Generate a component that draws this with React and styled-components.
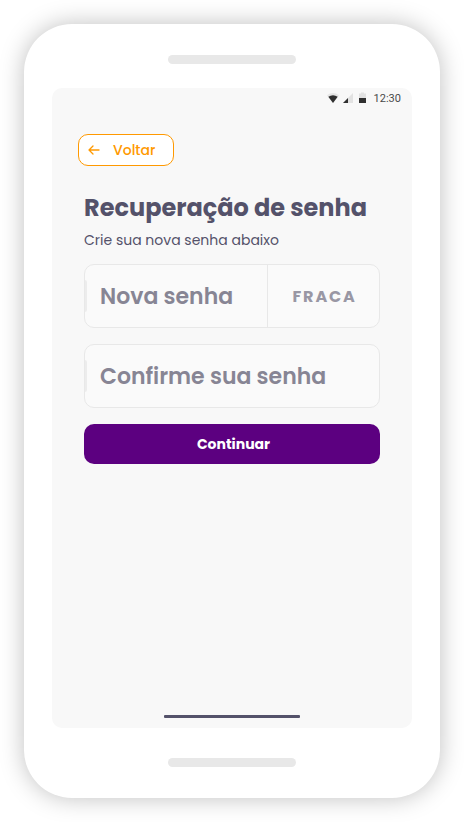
import React from 'react';
import styled, { createGlobalStyle } from 'styled-components';

const GlobalStyle = createGlobalStyle`
  * { box-sizing: border-box; }
  body { margin: 0; background: #fff; font-family: Poppins, Inter, sans-serif; overflow: hidden; }
  button, input { font: inherit; }
`;

const Stage = styled.main`
  width: 464px;
  height: 822px;
  padding: 24px;
`;

const Phone = styled.div`
  width: 416px;
  height: 774px;
  padding: 31px 28px;
  border-radius: 48px;
  background: #fff;
  box-shadow: 0 0 24px rgba(0, 0, 0, 0.25);
  display: flex;
  flex-direction: column;
  align-items: center;
  justify-content: space-between;
`;

const Speaker = styled.div`
  width: 128px;
  height: 9px;
  border-radius: 5px;
  background: #e8e8e8;
`;

const Screen = styled.section`
  width: 360px;
  height: 640px;
  margin-top: -6px;
  border-radius: 10px;
  background: #f8f8f8;
  display: flex;
  flex-direction: column;
`;

const StatusBar = styled.header`
  height: 20px;
  padding-right: 11px;
  display: flex;
  align-items: center;
  justify-content: flex-end;
`;

const StatusIcons = styled.svg`
  width: 40px;
  height: 12px;
  margin-right: 6px;
  overflow: visible;
`;

const Clock = styled.time`
  padding-top: 2px;
  font: 400 11px/20px Roboto, sans-serif;
  color: #4a4a4a;
`;

const Content = styled.div`
  flex: 1;
  padding: 26px 32px 0;
  display: flex;
  flex-direction: column;
  align-items: stretch;
`;

const BackButton = styled.button`
  width: 96px;
  height: 32px;
  margin: 0 0 0 -6px;
  padding: 0 0 0 9px;
  border: 1px solid #ff9900;
  border-radius: 10px;
  background: #fff;
  color: #ff9900;
  display: flex;
  align-items: center;
  gap: 13px;
`;

const Label = styled.span`
  font-size: ${(p) => p.$size}px;
  font-weight: ${(p) => p.$weight};
  letter-spacing: ${(p) => p.$spacing || 0}px;
  white-space: nowrap;
`;

const Title = styled.h1`
  margin: 26px 0 0;
  font-size: 24px;
  line-height: 32px;
  font-weight: 700;
  color: #54526a;
  white-space: nowrap;
`;

const Subtitle = styled.p`
  margin: 4px 0 0;
  font-size: 14px;
  line-height: 24px;
  color: #54526a;
`;

const Field = styled.div`
  height: 64px;
  margin-top: ${(p) => p.$gap}px;
  border: 1px solid #e8e8e8;
  border-radius: 10px;
  background: #fafafa;
  color: #878594;
  display: flex;
  align-items: center;
`;

const Accent = styled.span`
  width: 2px;
  height: 32px;
  border-radius: 0 2px 2px 0;
  background: #ececec;
`;

const Placeholder = styled.div`
  flex: 1;
  padding-left: 13px;
`;

const Strength = styled.div`
  width: 112px;
  height: 62px;
  padding-left: 24.5px;
  border-left: 1px solid #e8e8e8;
  color: #9997a4;
  display: flex;
  align-items: center;
`;

const ContinueButton = styled.button`
  height: 40px;
  margin: 16px 0 0;
  padding: 0 0 2px 3px;
  border: 0;
  border-radius: 10px;
  background: #5c0080;
  color: #fff;
`;

const HomeBar = styled.div`
  width: 136px;
  height: 3px;
  margin: 0 auto 10px;
  border-radius: 1px;
  background: #54526a;
`;

export default function App() {
  return (
    <Stage>
      <GlobalStyle />
      <Phone>
        <Speaker />
        <Screen>
          <StatusBar>
            <StatusIcons viewBox="0 0 40 12" aria-hidden="true">
              <path d="M-1 3.2Q5 -1.2 11 3.2L5 11Z" fill="#e5e5e5" />
              <path d="M0.3 4.8Q5 1.8 9.7 4.8L5 11Z" fill="#303030" />
              <path d="M15 11L25 1V11Z" fill="#e2e2e2" />
              <path d="M15 11L20 6V11Z" fill="#303030" />
              <path d="M31 1.5H33V0.5H36V1.5H38V6H31Z" fill="#e2e2e2" />
              <path d="M31 6H38V11H31Z" fill="#303030" />
            </StatusIcons>
            <Clock>12:30</Clock>
          </StatusBar>
          <Content>
            <BackButton type="button">
              <svg width="12" height="12" viewBox="0 0 12 12" fill="none" stroke="currentColor" strokeWidth="1.3" strokeLinecap="round" strokeLinejoin="round">
                <path d="M11 6H1.5M5 2L1 6L5 10" />
              </svg>
              <Label $size={14} $weight={500}>Voltar</Label>
            </BackButton>
            <Title>Recuperação de senha</Title>
            <Subtitle>Crie sua nova senha abaixo</Subtitle>
            <Field $gap={12}>
              <Accent />
              <Placeholder><Label $size={22} $weight={600}>Nova senha</Label></Placeholder>
              <Strength><Label $size={16} $weight={700} $spacing={1.85}>FRACA</Label></Strength>
            </Field>
            <Field $gap={16}>
              <Accent />
              <Placeholder><Label $size={22} $weight={600}>Confirme sua senha</Label></Placeholder>
            </Field>
            <ContinueButton type="button">
              <Label $size={14} $weight={700}>Continuar</Label>
            </ContinueButton>
          </Content>
          <HomeBar />
        </Screen>
        <Speaker />
      </Phone>
    </Stage>
  );
}
